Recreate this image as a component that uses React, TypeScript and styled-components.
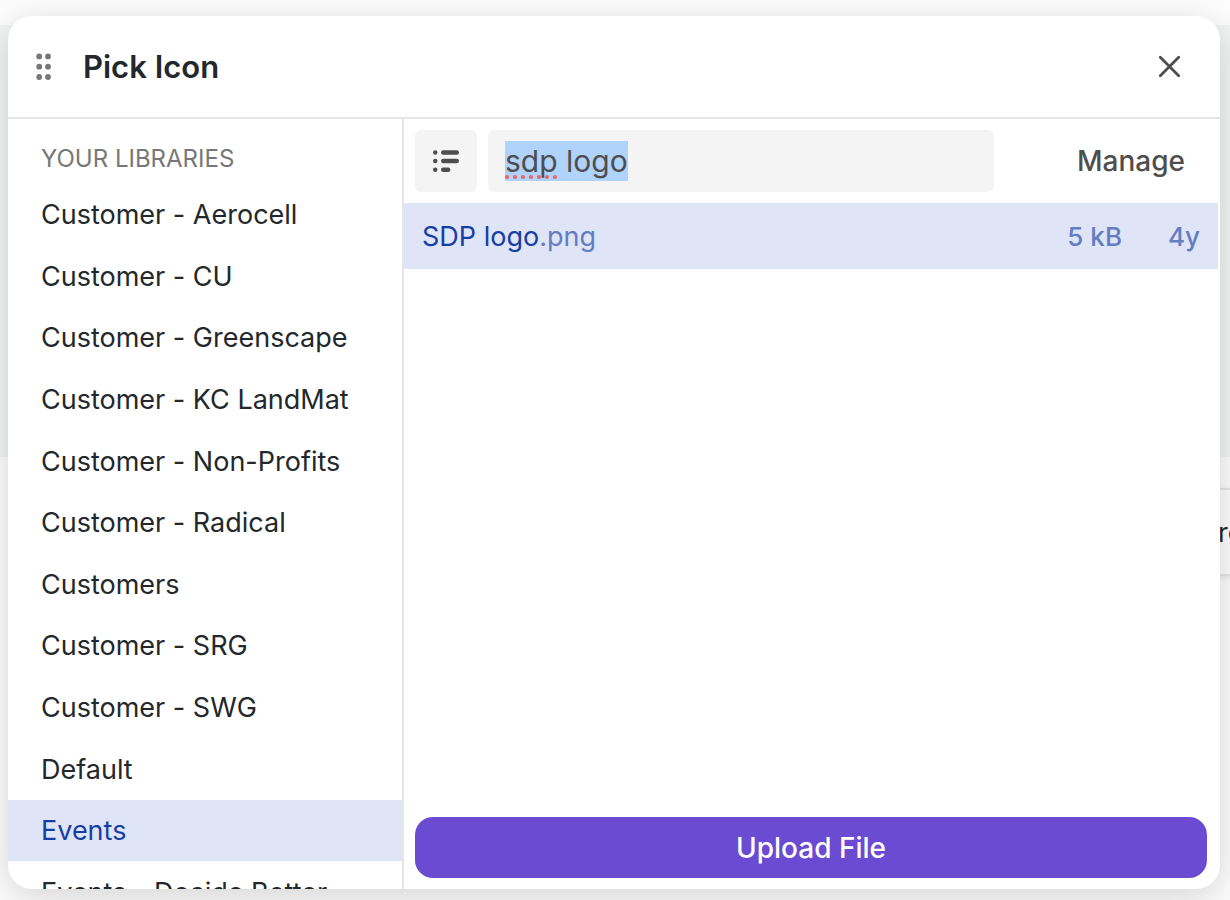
import React, { useEffect, useRef } from "react";
import styled, { createGlobalStyle } from "styled-components";

const GlobalStyle = createGlobalStyle`
  *, *::before, *::after { box-sizing: border-box; }
  body {
    margin: 0;
    overflow: hidden;
    font-family: Inter, "Liberation Sans", sans-serif;
    font-size: 27px;
    font-feature-settings: "calt" 0;
    color: #22282c;
    background: #fdfdfd;
  }
  button, input { font: inherit; font-feature-settings: inherit; color: inherit; border: 0; padding: 0; margin: 0; background: none; }
  ul, h1, h2 { margin: 0; padding: 0; list-style: none; }
`;

const Page = styled.div`
  position: relative;
  display: flex;
  height: 100vh;
  padding: 16px 10px 11px 8px;
  overflow: hidden;
`;

const Backdrop = styled.div`
  position: absolute;
  inset: 0;
  display: flex;
  flex-direction: column;
  padding-top: 25px;
`;

const Banner = styled.div`
  height: 432px;
  background: #f2f5f4;
`;

const BackdropCard = styled.div`
  display: flex;
  align-items: center;
  align-self: flex-end;
  width: 60px;
  height: 88px;
  margin: 31px -30px 0 0;
  padding-left: 16px;
  border: 2px solid #e6e6e6;
  box-shadow: 0 2px 6px rgba(0, 0, 0, 0.08);
  font-size: 27px;
`;

const Dialog = styled.section`
  position: relative;
  display: flex;
  flex: 1;
  flex-direction: column;
  min-width: 0;
  border-radius: 24px;
  background: #fff;
  box-shadow: 0 8px 36px rgba(0, 0, 0, 0.17);
  overflow: hidden;
`;

const Header = styled.header`
  display: flex;
  flex: none;
  align-items: center;
  height: 103px;
  padding: 0 36px 0 28px;
  border-bottom: 2px solid #e6e6e6;
`;

const Title = styled.h1`
  flex: 1;
  margin-left: 31px;
  font-size: 31px;
  font-weight: 600;
  line-height: 40px;
`;

const IconButton = styled.button`
  display: flex;
  align-items: center;
  justify-content: center;
`;

const Body = styled.div`
  display: flex;
  flex: 1;
  min-height: 0;
`;

const Sidebar = styled.nav`
  flex: none;
  width: 396px;
  border-right: 2px solid #e6e6e6;
  overflow: hidden;
`;

const SidebarHeading = styled.h2`
  padding: 25px 33px 10px;
  font-size: 24px;
  font-weight: 400;
  line-height: 30px;
  color: #777;
`;

const LibraryList = styled.ul`
  display: grid;
  grid-auto-rows: 1fr;
  height: 739px;
`;

const LibraryButton = styled.button<{ $active: boolean }>`
  display: block;
  width: 100%;
  height: 100%;
  padding: 0 33px;
  text-align: left;
  white-space: nowrap;
  color: ${(p) => (p.$active ? "#173ea5" : "inherit")};
  background: ${(p) => (p.$active ? "#dfe4f6" : "transparent")};
`;

const Content = styled.main`
  display: flex;
  flex: 1;
  flex-direction: column;
  min-width: 0;
`;

const Toolbar = styled.div`
  display: flex;
  gap: 11px;
  padding: 11px 13px 11px 11px;
  color: #4e4e4e;
`;

const ViewButton = styled(IconButton)`
  width: 62px;
  height: 62px;
  border-radius: 6px;
  background: #f4f4f4;
`;

const SearchBox = styled.label`
  position: relative;
  display: flex;
  flex: 1;
  align-items: center;
  padding: 0 17px;
  border-radius: 6px;
  background: #f4f4f4;
`;

const SearchInput = styled.input`
  width: 100%;
  height: 40px;
  line-height: 40px;
  font-size: 30px;
  outline: none;
  &::selection { color: #4e4e4e; background: #b0d3fb; }
`;

const SpellingMark = styled.span`
  position: absolute;
  left: 17px;
  top: 45px;
  width: 52px;
  border-bottom: 4px dotted #f0605f;
`;

const ManageButton = styled.button`
  width: 202px;
  padding-right: 22px;
  text-align: right;
  font-size: 28px;
  font-weight: 500;
`;

const FileList = styled.ul`
  flex: 1;
  padding-right: 2px;
`;

const FileRow = styled.button`
  display: flex;
  align-items: center;
  width: 100%;
  height: 66px;
  padding: 0 18px;
  text-align: left;
  color: #173ea5;
  background: #dfe4f6;
`;

const FileName = styled.span`
  flex: 1;
`;

const Muted = styled.span`
  color: #627dc2;
`;

const FileMeta = styled(Muted)`
  margin-left: 46px;
  font-size: 26px;
  font-weight: 500;
`;

const UploadButton = styled.button`
  flex: none;
  height: 61px;
  margin: 0 13px 11px 11px;
  border-radius: 18px;
  font-size: 28px;
  font-weight: 500;
  color: #fff;
  background: #6b4bd1;
`;

const libraries = [
  "Customer - Aerocell",
  "Customer - CU",
  "Customer - Greenscape",
  "Customer - KC LandMat",
  "Customer - Non-Profits",
  "Customer - Radical",
  "Customers",
  "Customer - SRG",
  "Customer - SWG",
  "Default",
  "Events",
  "Events - Decide Better",
];

const GripIcon = () => (
  <svg width="16" height="28" viewBox="0 0 16 28" fill="#777" aria-hidden="true">
    {[3.4, 13.7, 24].map((y) => (
      <React.Fragment key={y}>
        <circle cx="3.2" cy={y} r="2.9" />
        <circle cx="12" cy={y} r="2.9" />
      </React.Fragment>
    ))}
  </svg>
);

const CloseIcon = () => (
  <svg width="30" height="30" viewBox="0 0 30 30" stroke="#4e4e4e" strokeWidth="2.8" strokeLinecap="round" aria-hidden="true">
    <path d="M6.3 5.3 24.7 23.7M24.7 5.3 6.3 23.7" />
  </svg>
);

const ListIcon = () => (
  <svg width="28" height="24" viewBox="0 0 28 24" stroke="#4e4e4e" strokeWidth="4.4" strokeLinecap="round" aria-hidden="true">
    <path d="M3.2 3.5h.1M3.2 12h.1M3.2 20.7h.1M11.2 3.5h13.6M11.2 12h13.6M11.2 20.7h5" />
  </svg>
);

export default function App() {
  const search = useRef<HTMLInputElement>(null);

  useEffect(() => {
    search.current?.focus();
    search.current?.select();
  }, []);

  return (
    <>
      <GlobalStyle />
      <Page>
        <Backdrop aria-hidden="true">
          <Banner />
          <BackdropCard>re</BackdropCard>
        </Backdrop>
        <Dialog role="dialog" aria-labelledby="dialog-title">
          <Header>
            <IconButton type="button" aria-label="Move">
              <GripIcon />
            </IconButton>
            <Title id="dialog-title">Pick Icon</Title>
            <IconButton type="button" aria-label="Close">
              <CloseIcon />
            </IconButton>
          </Header>
          <Body>
            <Sidebar>
              <SidebarHeading>YOUR LIBRARIES</SidebarHeading>
              <LibraryList>
                {libraries.map((name) => (
                  <li key={name}>
                    <LibraryButton type="button" $active={name === "Events"}>
                      {name}
                    </LibraryButton>
                  </li>
                ))}
              </LibraryList>
            </Sidebar>
            <Content>
              <Toolbar>
                <ViewButton type="button" aria-label="List view">
                  <ListIcon />
                </ViewButton>
                <SearchBox>
                  <SearchInput
                    ref={search}
                    type="text"
                    aria-label="Search files"
                    defaultValue="sdp logo"
                    spellCheck={false}
                  />
                  <SpellingMark />
                </SearchBox>
                <ManageButton type="button">Manage</ManageButton>
              </Toolbar>
              <FileList>
                <li>
                  <FileRow type="button">
                    <FileName>
                      SDP logo<Muted>.png</Muted>
                    </FileName>
                    <FileMeta>5 kB</FileMeta>
                    <FileMeta>4y</FileMeta>
                  </FileRow>
                </li>
              </FileList>
              <UploadButton type="button">Upload File</UploadButton>
            </Content>
          </Body>
        </Dialog>
      </Page>
    </>
  );
}
